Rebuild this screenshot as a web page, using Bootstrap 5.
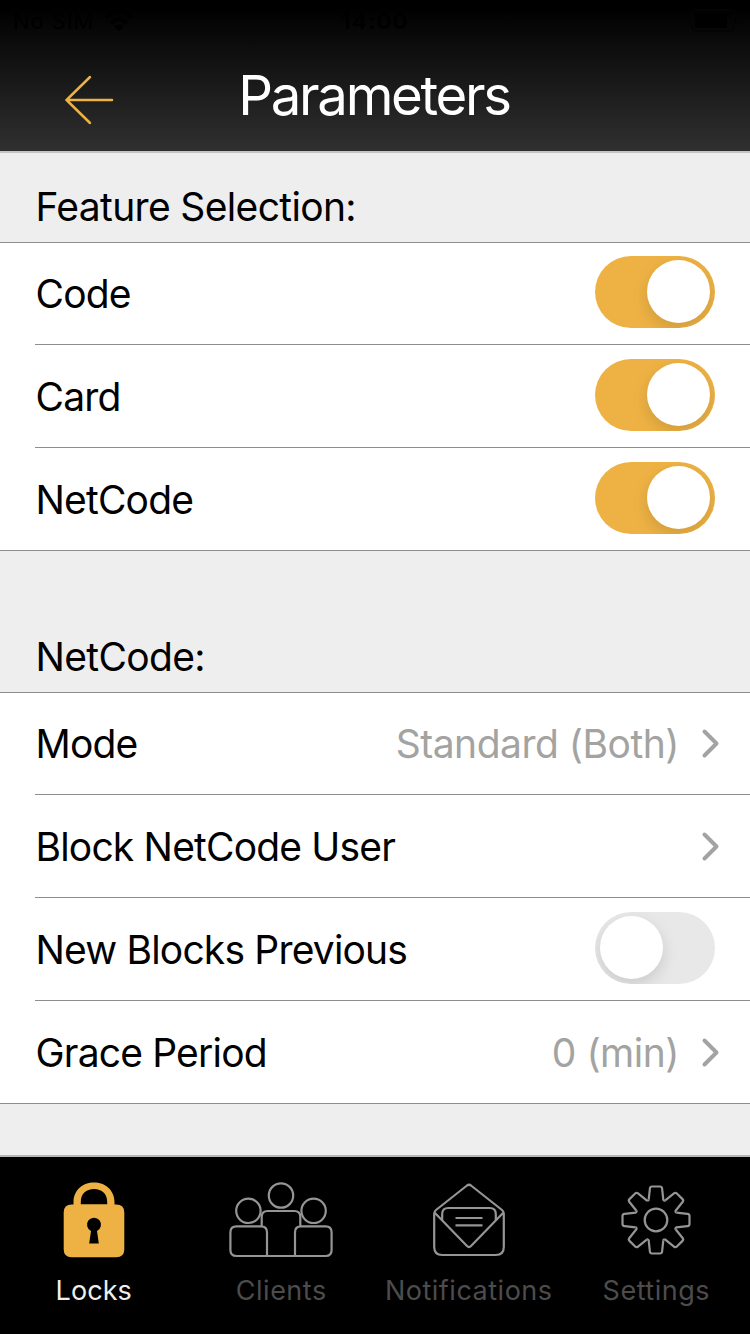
<!DOCTYPE html>
<html lang="en">
<head>
<meta charset="utf-8">
<meta name="viewport" content="width=device-width, initial-scale=1">
<title>Parameters</title>
<link rel="stylesheet" href="https://cdn.jsdelivr.net/npm/bootstrap@5.3.0/dist/css/bootstrap.min.css">
<style>
body{font-family:Inter,"Liberation Sans",sans-serif;background:#eee;color:#000}
.screen{width:750px;height:1334px}
.top-bar{height:153px;background:linear-gradient(#000 8px,#303030 151px);border-bottom:2px solid #c4c4c4}
.status{height:40px;padding:0 13px;font-size:22px;line-height:42px;color:#000}
.sim{letter-spacing:.9px}
.clock{font-weight:600;letter-spacing:1.5px}
.title{font-size:54.5px;line-height:60px;margin-top:25px;padding-right:2px;color:#fff;letter-spacing:-2.3px}
.back{left:60px;top:70px}
.section-head{font-size:39px;line-height:40px;padding:0 0 15px 35.5px;letter-spacing:-.65px}
.h-first{height:89px}
.h-next{height:141px}
.rows{border-top:1px solid #8e8e8e;border-bottom:1px solid #8e8e8e}
.rows .item{height:103px;margin-left:35px;padding-right:35px;border-bottom:1px solid #8e8e8e}
.rows .item:first-child{height:102px}
.rows .item:last-child{height:102px;border-bottom:0}
.name,.val{font-size:39px;line-height:40px;margin-bottom:30px}
.name{letter-spacing:-.82px;padding-left:.5px}
.val{color:#a3a3a1;margin-right:21px;letter-spacing:-.5px}
.item .form-check-input{width:120px;height:72px;margin:0 0 16px;border:0;border-radius:36px;background:#e8e8e8;position:relative;overflow:hidden}
.item .form-check-input:checked{background:#eeb244}
.item .form-check-input::before{content:"";position:absolute;left:5px;top:4px;width:63px;height:63px;border-radius:50%;background:#fff;box-shadow:0 6px 16px rgba(0,0,0,.13)}
.item .form-check-input:checked::before{left:52px}
.chev{margin:0 -5px 35px 0}
.tabs{height:179px;background:#000;border-top:2px solid #b4b6b7}
.tabs .nav-link{padding:13px 0 0;color:#4c4c4c;font-size:27px;line-height:30px;letter-spacing:.5px}
.tabs .nav-link.active{color:#eee;letter-spacing:.1px}
.tabs svg{display:block;margin:0 auto 6px;fill:none;stroke:#959595;stroke-width:2.2}
</style>
</head>
<body>
<div class="screen d-flex flex-column overflow-hidden">

<header class="top-bar position-relative flex-shrink-0">
  <div class="status row g-0">
    <div class="col d-flex align-items-center">
      <span class="sim">No SIM</span>
      <svg class="ms-2" width="34" height="24" viewBox="-2 0 32 24" fill="none" stroke="#000"><path d="M1 8.500Q14-4 27 8.500" stroke-width="4"/><path d="M6 14Q14 6.500 22 14" stroke-width="4"/><path d="M9 17.500Q14 13.500 19 17.500L14 22.500Z" fill="#000" stroke="none"/></svg>
    </div>
    <div class="col text-center clock">14:00</div>
    <div class="col d-flex align-items-center justify-content-end">
      <svg width="48" height="24" viewBox="0 0 48 24"><rect x="3" y="1" width="42" height="21" rx="5" fill="none" stroke="#040404" stroke-width="2"/><rect x="6" y="4" width="32" height="15" rx="3"/><path d="M46 8.500q3 3 0 6z"/></svg>
    </div>
  </div>
  <h1 class="title text-center fw-normal mb-0">Parameters</h1>
  <a href="#" class="back position-absolute" aria-label="Back"><svg class="d-block" width="60" height="60" fill="none" stroke="#eeb244" stroke-width="2.500" stroke-linecap="round"><path d="M30 7 6.500 30 30 53M6.500 30H52"/></svg></a>
</header>

<main class="flex-grow-1">
  <div class="section-head h-first d-flex align-items-end">Feature Selection:</div>
  <div class="rows bg-white">
    <label class="item d-flex align-items-end justify-content-between"><span class="name">Code</span><input class="form-check-input" type="checkbox" role="switch" checked></label>
    <label class="item d-flex align-items-end justify-content-between"><span class="name">Card</span><input class="form-check-input" type="checkbox" role="switch" checked></label>
    <label class="item d-flex align-items-end justify-content-between"><span class="name">NetCode</span><input class="form-check-input" type="checkbox" role="switch" checked></label>
  </div>

  <div class="section-head h-next d-flex align-items-end">NetCode:</div>
  <div class="rows bg-white">
    <div class="item d-flex align-items-end justify-content-between"><span class="name">Mode</span>
      <span class="d-flex align-items-end"><span class="val">Standard (Both)</span><svg class="chev" width="20" height="32" fill="none" stroke="#a3a3a1" stroke-width="4" stroke-linecap="round" stroke-linejoin="round"><path d="M4.500 4.500 16.500 16.500 4.500 28.500"/></svg></span></div>
    <div class="item d-flex align-items-end justify-content-between"><span class="name">Block NetCode User</span>
      <span class="d-flex align-items-end"><svg class="chev" width="20" height="32" fill="none" stroke="#a3a3a1" stroke-width="4" stroke-linecap="round" stroke-linejoin="round"><path d="M4.500 4.500 16.500 16.500 4.500 28.500"/></svg></span></div>
    <label class="item d-flex align-items-end justify-content-between"><span class="name">New Blocks Previous</span><input class="form-check-input" type="checkbox" role="switch"></label>
    <div class="item d-flex align-items-end justify-content-between"><span class="name">Grace Period</span>
      <span class="d-flex align-items-end"><span class="val">0 (min)</span><svg class="chev" width="20" height="32" fill="none" stroke="#a3a3a1" stroke-width="4" stroke-linecap="round" stroke-linejoin="round"><path d="M4.500 4.500 16.500 16.500 4.500 28.500"/></svg></span></div>
  </div>
</main>

<nav class="tabs nav nav-justified flex-shrink-0">
  <div class="nav-item"><a class="nav-link active" href="#">
    <svg width="120" height="100" viewBox="-60 0 120 100"><path d="M-20.500 34.500V32C-20.500 20-11 12.500 0 12.500S20.500 20 20.500 32V34.500H22.300Q30.300 34.500 30.300 42.500V79.300Q30.300 87.300 22.300 87.300H-22.300Q-30.300 87.300-30.300 79.300V42.500Q-30.300 34.500-22.300 34.500ZM-13.200 34.300H13.200V32C13.200 24 8 19 0 19S-13.200 24-13.200 32ZM-3 61-4.800 73.500H4.800L3 61A7 7 0 1 0-3 61Z" fill="#eeb244" fill-rule="evenodd" stroke="none"/></svg>Locks</a></div>
  <div class="nav-item"><a class="nav-link" href="#">
    <svg width="120" height="100" viewBox="-60 0 120 100"><circle cy="25.500" r="12.200"/><circle cx="-32.600" cy="40.800" r="12.200"/><circle cx="32.600" cy="40.800" r="12.200"/><path d="M-19.300 56V47Q-19.300 41-13.300 41H13.300Q19.300 41 19.300 47V56M-14 86V62.300Q-14 56.300-20 56.300H-44.600Q-50.600 56.300-50.600 62.300V80Q-50.600 86-44.600 86H44.600Q50.600 86 50.600 80V62.300Q50.600 56.300 44.600 56.300H20Q14 56.300 14 62.300V86"/></svg>Clients</a></div>
  <div class="nav-item"><a class="nav-link" href="#">
    <svg width="120" height="100" viewBox="-60 0 120 100"><path d="M-34.800 43.500Q-34.800 41.500-33 40L-2 15.500Q0 14 2 15.500L33 40Q34.800 41.500 34.800 43.500V77Q34.800 85 26.800 85H-26.800Q-34.800 85-34.800 77ZM-34.500 42.500-2 76Q0 78 2 76L34.500 42.500M-26.800 50V44Q-26.800 38-20.800 38H20.800Q26.800 38 26.800 44V50M-13.500 48H13.500M-13.500 55.300H13.500"/></svg>Notifications</a></div>
  <div class="nav-item"><a class="nav-link" href="#">
    <svg width="120" height="100" viewBox="-60 0 120 100"><defs><path id="tooth" d="M-7.300-20.400-6.100-31.500Q-5.900-33.500-4-33.500H4Q5.900-33.500 6.100-31.500L7.300-20.400Q8.400-18.800 9.260-19.600"/></defs><g transform="translate(0 50)"><circle r="11.300"/><use href="#tooth"/><use href="#tooth" transform="rotate(45)"/><use href="#tooth" transform="rotate(90)"/><use href="#tooth" transform="rotate(135)"/><use href="#tooth" transform="rotate(180)"/><use href="#tooth" transform="rotate(225)"/><use href="#tooth" transform="rotate(270)"/><use href="#tooth" transform="rotate(315)"/></g></svg>Settings</a></div>
</nav>
</div>
<script src="https://cdn.jsdelivr.net/npm/bootstrap@5.3.0/dist/js/bootstrap.bundle.min.js"></script>
</body>
</html>
